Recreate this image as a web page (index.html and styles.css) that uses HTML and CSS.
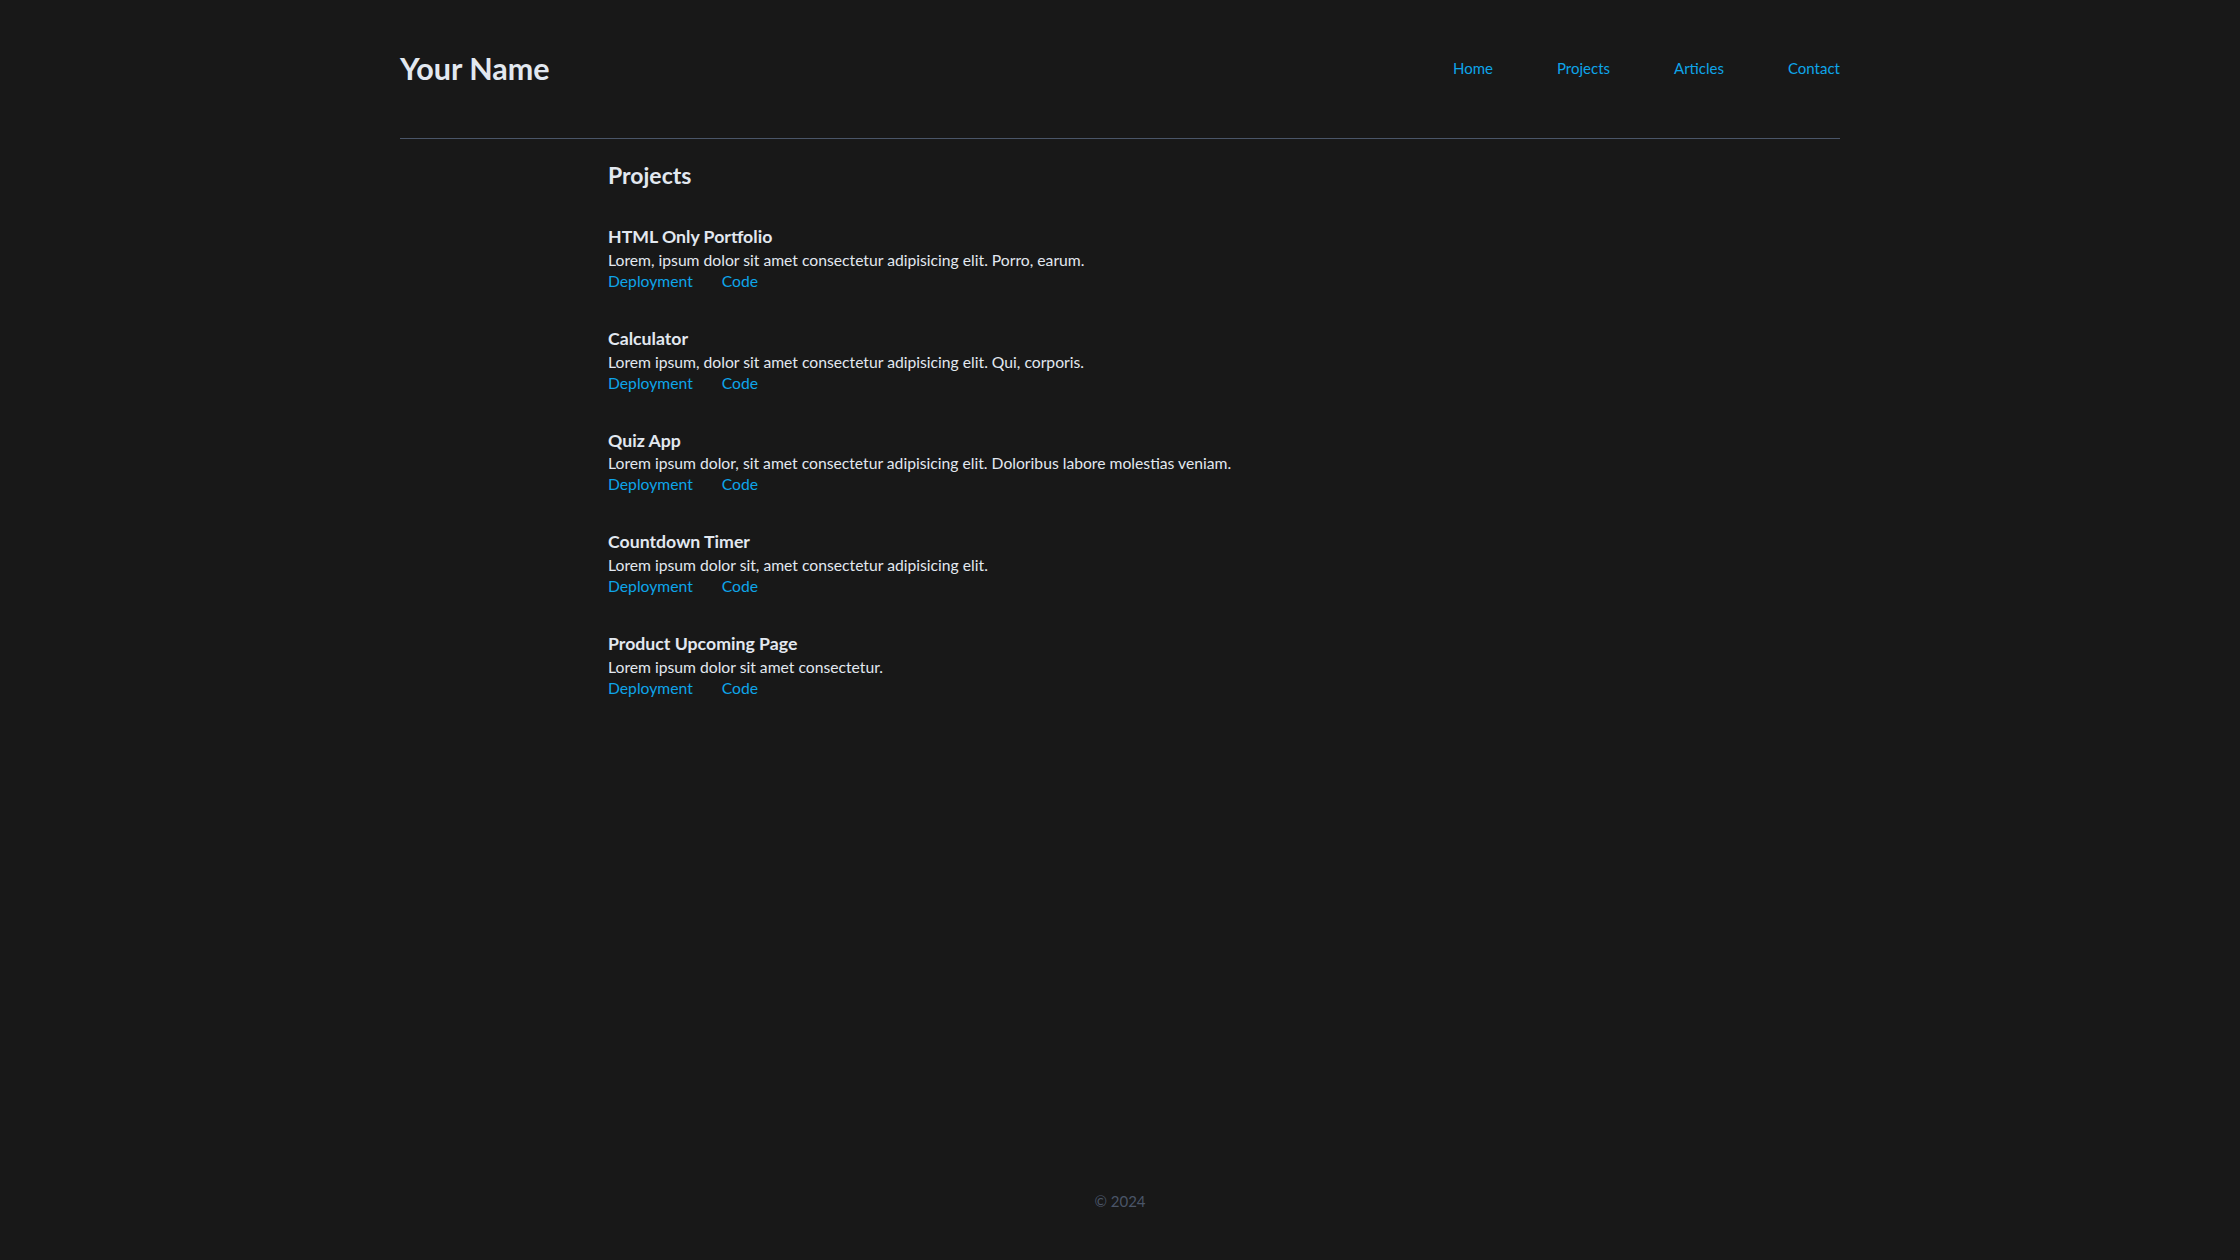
FILE: index.html
```html
<!DOCTYPE html>
<html lang="en">
<head>
<meta charset="utf-8">
<title>Your Name</title>
<link rel="stylesheet" href="styles.css">
</head>
<body>
<div class="page">
  <header class="site-header">
    <a class="brand" href="#">Your Name</a>
    <nav class="nav">
      <a href="#">Home</a>
      <a href="#">Projects</a>
      <a href="#">Articles</a>
      <a href="#">Contact</a>
    </nav>
  </header>
  <main class="content">
    <h1 class="page-title">Projects</h1>
    <ul class="projects">
      <li class="project">
        <h2 class="project-title">HTML Only Portfolio</h2>
        <p class="project-desc">Lorem, ipsum dolor sit amet consectetur adipisicing elit. Porro, earum.</p>
        <div class="project-links"><a href="#">Deployment</a><a href="#">Code</a></div>
      </li>
      <li class="project">
        <h2 class="project-title">Calculator</h2>
        <p class="project-desc">Lorem ipsum, dolor sit amet consectetur adipisicing elit. Qui, corporis.</p>
        <div class="project-links"><a href="#">Deployment</a><a href="#">Code</a></div>
      </li>
      <li class="project">
        <h2 class="project-title">Quiz App</h2>
        <p class="project-desc">Lorem ipsum dolor, sit amet consectetur adipisicing elit. Doloribus labore molestias veniam.</p>
        <div class="project-links"><a href="#">Deployment</a><a href="#">Code</a></div>
      </li>
      <li class="project">
        <h2 class="project-title">Countdown Timer</h2>
        <p class="project-desc">Lorem ipsum dolor sit, amet consectetur adipisicing elit.</p>
        <div class="project-links"><a href="#">Deployment</a><a href="#">Code</a></div>
      </li>
      <li class="project">
        <h2 class="project-title">Product Upcoming Page</h2>
        <p class="project-desc">Lorem ipsum dolor sit amet consectetur.</p>
        <div class="project-links"><a href="#">Deployment</a><a href="#">Code</a></div>
      </li>
    </ul>
  </main>
  <footer class="site-footer">&copy; 2024</footer>
</div>
</body>
</html>
```

FILE: styles.css
```css
* { box-sizing: border-box; }
html, body { margin: 0; padding: 0; }
body {
  background: #181818;
  color: #e2e8f0;
  font-family: "Lato", "Noto Sans", sans-serif;
  font-size: 15.7px;
  line-height: 1.4;
}
a { text-decoration: none; color: #0ea5e9; }
.page {
  min-height: 1260px;
  display: flex;
  flex-direction: column;
}
.site-header {
  width: 1440px;
  margin: 0 auto;
  display: flex;
  justify-content: space-between;
  align-items: center;
  padding: 48px 0 50px;
  border-bottom: 1px solid #4a5568;
}
.brand {
  color: #e2e8f0;
  font-size: 30.5px;
  font-weight: 700;
  line-height: 40px;
}
.nav { display: flex; gap: 64px; font-size: 15px; padding-top: 1px; }
.content {
  width: 1024px;
  margin: 0 auto;
  padding-top: 20px;
  flex: 1;
}
.page-title {
  margin: 0 0 34px;
  font-size: 23px;
  font-weight: 700;
  line-height: 1.4;
}
.projects { list-style: none; margin: 0; padding: 0; display: flex; flex-direction: column; gap: 34px; }
.project-title { margin: 0; font-size: 17.7px; font-weight: 700; line-height: 1.4; }
.project-desc { margin: 0; line-height: 1.4; }
.project-links { display: flex; gap: 29px; margin-top: -1px; }
.site-footer {
  text-align: center;
  color: #4a5568;
  font-size: 15px;
  padding: 0 0 48px;
}
```
